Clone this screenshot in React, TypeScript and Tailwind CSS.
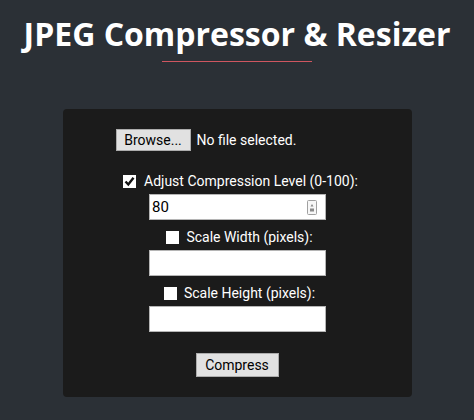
import React from "react";

function Box({ checked }: { checked?: boolean }) {
  return (
    <span className="inline-flex h-[13px] w-[13px] items-center justify-center bg-white">
      {checked && (
        <svg width="11" height="11" viewBox="0 0 11 11">
          <path d="M1.5 5.5 L4.3 8.5 L9.5 1.8" fill="none" stroke="#111" strokeWidth="2.4" />
        </svg>
      )}
    </span>
  );
}

function TextBox({ value }: { value?: string }) {
  return (
    <div className="relative ml-[1px] flex h-[26px] w-[177px] items-center border border-[#b5b5b5] bg-white pl-[2px] text-[15px] text-black">
      {value}
      {value && (
        <svg className="absolute right-[8px] top-[5px]" width="10" height="15" viewBox="0 0 10 15">
          <rect x="0.5" y="0.5" width="9" height="14" rx="1" fill="#f7f7f7" stroke="#a0a0a0" />
          <path d="M3.5 6.5 L5 4 L6.5 6.5 Z" fill="#8a8a8a" />
          <rect x="3" y="8.5" width="4" height="3" fill="#8a8a8a" />
        </svg>
      )}
    </div>
  );
}

export default function App() {
  return (
    <div className="min-h-[420px] w-[474px] bg-[#2b3036] font-['Roboto',sans-serif]">
      <div className="flex flex-col items-center pt-[12px]">
        <h1 className="font-['Open_Sans',sans-serif] text-[32px] font-bold leading-[44px] text-white">
          JPEG Compressor &amp; Resizer
        </h1>
        <div className="mt-[5px] w-[150px] border-t border-[#cf5660]" />
      </div>

      <div className="mx-auto mt-[47px] flex w-[349px] flex-col items-center rounded-[4px] bg-[#1b1b1b] pt-[20px] pb-[20px] text-[14px] text-white">
        <div className="ml-[53px] flex items-center gap-[6px] self-start">
          <button className="h-[22px] w-[75px] border border-[#acacac] bg-[#e1e1e1] text-[14px] text-black">
            Browse...
          </button>
          <span>No file selected.</span>
        </div>

        <label className="mt-[20px] flex items-center gap-[8px] pl-[7px]">
          <Box checked />
          <span>Adjust Compression Level (0-100):</span>
        </label>
        <div className="mt-[2px]">
          <TextBox value="80" />
        </div>

        <label className="mt-[7px] flex items-center gap-[7px] pl-[5px]">
          <Box />
          <span>Scale Width (pixels):</span>
        </label>
        <div className="mt-[2px]">
          <TextBox />
        </div>

        <label className="mt-[7px] flex items-center gap-[7px] pl-[5px]">
          <Box />
          <span>Scale Height (pixels):</span>
        </label>
        <div className="mt-[2px]">
          <TextBox />
        </div>

        <button className="mt-[21px] h-[24px] w-[83px] border border-[#acacac] bg-[#e1e1e1] text-[14px] text-black">
          Compress
        </button>
      </div>
    </div>
  );
}
